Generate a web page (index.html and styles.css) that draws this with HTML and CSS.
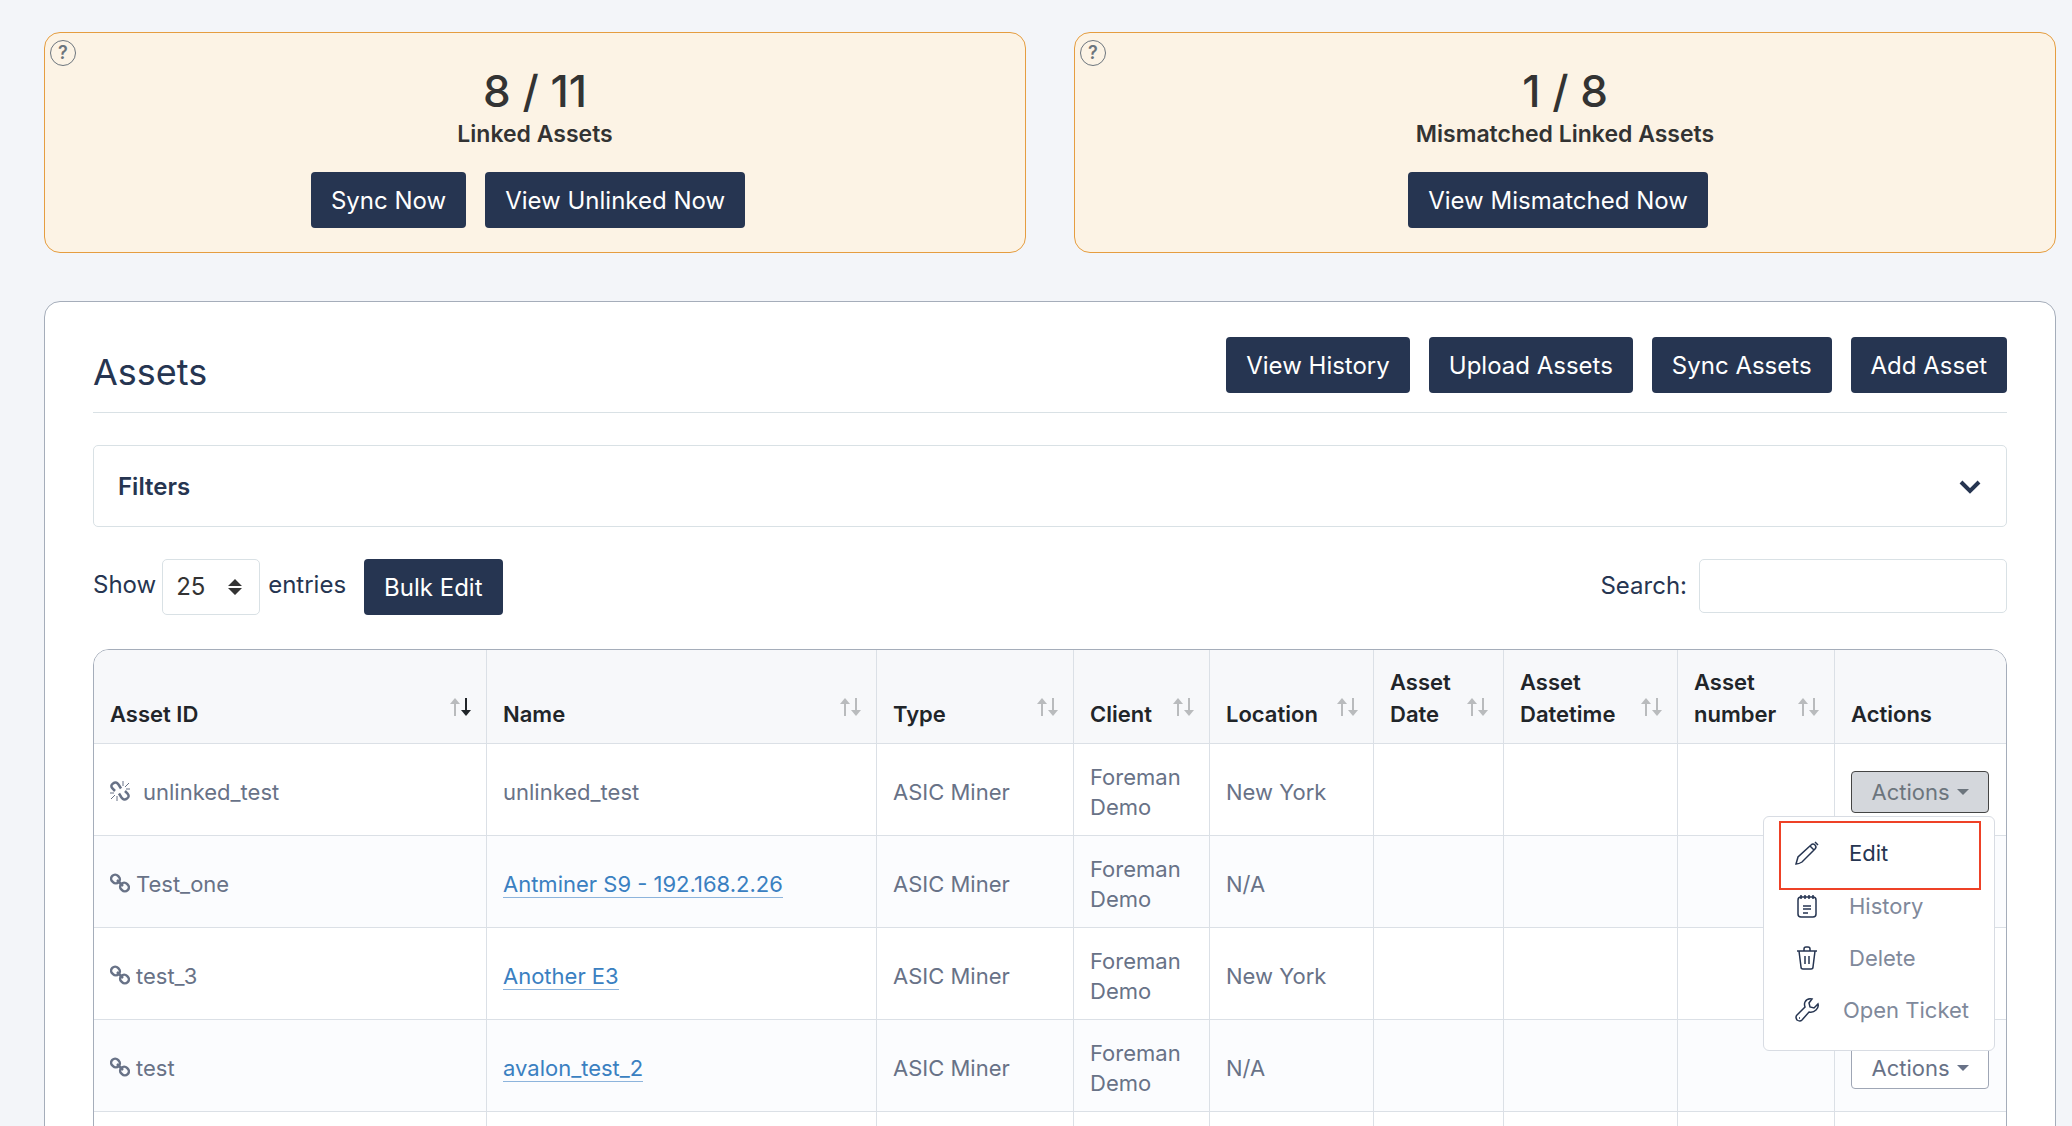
FILE: index.html
```html
<!DOCTYPE html>
<html lang="en">
<head>
  <meta charset="utf-8">
  <title>Assets</title>
  <link rel="stylesheet" href="styles.css">
</head>
<body>
  <svg class="sprite" aria-hidden="true">
    <symbol id="icon-sort" viewBox="0 0 22 18">
      <path class="sort-up" d="M5 18V5" />
      <path class="sort-up head" d="M0 6L5 0L10 6Z" />
      <path class="sort-down" d="M16 0V13" />
      <path class="sort-down head" d="M11 12L16 18L21 12Z" />
    </symbol>
    <symbol id="icon-link" viewBox="0 0 20 20">
      <rect x="1" y="2" width="9" height="8" rx="4" transform="rotate(45 5.5 6)" />
      <rect x="10" y="10" width="9" height="8" rx="4" transform="rotate(45 14.5 14)" />
      <path d="M7 7L13 13" />
    </symbol>
    <symbol id="icon-unlink" viewBox="0 0 20 20">
      <path d="M5 10L2.500 7.500Q0 4.500 3 2.500Q6 0 8.500 3.500L11 7.500" />
      <path d="M15 10L17.500 12.500Q20 15.500 17 17.500Q14 20 11.500 16.500L9 12.500" />
      <path class="thin" d="M13 5V0M15 6L19 2M16 8H20M0 12H4M5 14L1 18M7 15V20" />
    </symbol>
  </svg>

  <div class="page">
    <div class="summary">
      <section class="card">
        <button class="help" aria-label="Help">?</button>
        <p class="count">8 / 11</p>
        <h2>Linked Assets</h2>
        <div class="buttons">
          <button class="btn">Sync Now</button>
          <button class="btn">View Unlinked Now</button>
        </div>
      </section>
      <section class="card">
        <button class="help" aria-label="Help">?</button>
        <p class="count">1 / 8</p>
        <h2>Mismatched Linked Assets</h2>
        <div class="buttons">
          <button class="btn">View Mismatched Now</button>
        </div>
      </section>
    </div>

    <main class="panel">
      <header class="panel-header">
        <h1>Assets</h1>
        <div class="buttons">
          <button class="btn">View History</button>
          <button class="btn">Upload Assets</button>
          <button class="btn">Sync Assets</button>
          <button class="btn">Add Asset</button>
        </div>
      </header>

      <button class="filters">
        <span>Filters</span>
        <svg class="chevron" viewBox="0 0 24 16"><path d="M3 3L12 12L21 3" /></svg>
      </button>

      <div class="toolbar">
        <label for="entries">Show</label>
        <div class="select-box">
          <select id="entries">
            <option>25</option>
          </select>
          <svg class="select-arrows" viewBox="0 0 14 16"><path d="M0 7L7 0L14 7ZM0 9H14L7 16Z" /></svg>
        </div>
        <label for="entries">entries</label>
        <button class="btn bulk">Bulk Edit</button>
        <div class="search">
          <label for="search">Search:</label>
          <input type="text" id="search">
        </div>
      </div>

      <div class="table-box">
        <table>
          <colgroup>
            <col class="col-id">
            <col class="col-name">
            <col class="col-type">
            <col class="col-client">
            <col class="col-location">
            <col class="col-date">
            <col class="col-datetime">
            <col class="col-number">
            <col class="col-actions">
          </colgroup>
          <thead>
            <tr>
              <th><div class="head-cell"><span>Asset ID</span><svg class="sort active"><use href="#icon-sort" /></svg></div></th>
              <th><div class="head-cell"><span>Name</span><svg class="sort"><use href="#icon-sort" /></svg></div></th>
              <th><div class="head-cell"><span>Type</span><svg class="sort"><use href="#icon-sort" /></svg></div></th>
              <th><div class="head-cell"><span>Client</span><svg class="sort"><use href="#icon-sort" /></svg></div></th>
              <th><div class="head-cell"><span>Location</span><svg class="sort"><use href="#icon-sort" /></svg></div></th>
              <th><div class="head-cell"><span>Asset<br>Date</span><svg class="sort"><use href="#icon-sort" /></svg></div></th>
              <th><div class="head-cell"><span>Asset<br>Datetime</span><svg class="sort"><use href="#icon-sort" /></svg></div></th>
              <th><div class="head-cell"><span>Asset<br>number</span><svg class="sort"><use href="#icon-sort" /></svg></div></th>
              <th><div class="head-cell"><span>Actions</span></div></th>
            </tr>
          </thead>
          <tbody>
            <tr>
              <td><svg class="link-icon unlinked"><use href="#icon-unlink" /></svg>unlinked_test</td>
              <td>unlinked_test</td>
              <td>ASIC Miner</td>
              <td>Foreman Demo</td>
              <td>New York</td>
              <td></td>
              <td></td>
              <td></td>
              <td>
                <div class="dropdown">
                  <button class="btn-actions open" aria-expanded="true">Actions <span class="caret"></span></button>
                  <div class="menu">
                    <a class="menu-item selected" href="#edit">
                      <svg viewBox="0 0 24 24"><path d="M1 23L3 16L16 4Q18 2 20 4Q22 6 20 8L7 21Q4 23 1 23ZM15 5L19 9M20 1L23 4" /></svg>
                      <span>Edit</span>
                    </a>
                    <a class="menu-item" href="#history">
                      <svg viewBox="0 0 24 24"><rect x="3" y="3" width="18" height="20" rx="3" /><path d="M6 1V5M10 1V5M14 1V5M18 1V5M8 12H16M8 15H16M8 19H13" /></svg>
                      <span>History</span>
                    </a>
                    <a class="menu-item" href="#delete">
                      <svg viewBox="0 0 24 24"><path d="M2 5H22M4 5L6 21Q6 23 8 23H16Q18 23 18 21L20 5M9 5V3Q9 1 11 1H13Q15 1 15 3V5M10 10V18M14 10V18" /></svg>
                      <span>Delete</span>
                    </a>
                    <a class="menu-item ticket" href="#ticket">
                      <svg viewBox="0 0 24 24"><path d="M17 1Q12 0 10 4Q9 6 10 9L2 17Q0 19 2 22Q5 24 7 22L14 14Q18 15 21 12Q24 9 23 6L19 10L15 9L14 5L17 1ZM4 20H5" /></svg>
                      <span>Open Ticket</span>
                    </a>
                  </div>
                </div>
              </td>
            </tr>
            <tr>
              <td><svg class="link-icon"><use href="#icon-link" /></svg>Test_one</td>
              <td><a class="miner" href="#miner">Antminer S9 - 192.168.2.26</a></td>
              <td>ASIC Miner</td>
              <td>Foreman Demo</td>
              <td>N/A</td>
              <td></td>
              <td></td>
              <td></td>
              <td></td>
            </tr>
            <tr>
              <td><svg class="link-icon"><use href="#icon-link" /></svg>test_3</td>
              <td><a class="miner" href="#miner">Another E3</a></td>
              <td>ASIC Miner</td>
              <td>Foreman Demo</td>
              <td>New York</td>
              <td></td>
              <td></td>
              <td></td>
              <td></td>
            </tr>
            <tr>
              <td><svg class="link-icon"><use href="#icon-link" /></svg>test</td>
              <td><a class="miner" href="#miner">avalon_test_2</a></td>
              <td>ASIC Miner</td>
              <td>Foreman Demo</td>
              <td>N/A</td>
              <td></td>
              <td></td>
              <td></td>
              <td>
                <div class="dropdown">
                  <button class="btn-actions">Actions <span class="caret"></span></button>
                </div>
              </td>
            </tr>
            <tr>
              <td></td>
              <td></td>
              <td></td>
              <td></td>
              <td></td>
              <td></td>
              <td></td>
              <td></td>
              <td></td>
            </tr>
          </tbody>
        </table>
      </div>
    </main>
  </div>
</body>
</html>
```

FILE: styles.css
```css
* {
  box-sizing: border-box;
}

body {
  margin: 0;
  background-color: #f3f5f9;
  color: #263551;
  font-family: Inter, "Open Sans", sans-serif;
  font-size: 24px;
  line-height: 36px;
}

button,
input,
select {
  font: inherit;
  color: inherit;
}

button {
  cursor: pointer;
}

.sprite {
  position: absolute;
  width: 0;
  height: 0;
}

.page {
  height: 100vh;
  overflow: hidden;
  padding: 32px 16px 0 44px;
}

/* Summary cards */
.summary {
  display: grid;
  grid-template-columns: 1fr 1fr;
  gap: 48px;
  margin-bottom: 48px;
}

.card {
  position: relative;
  height: 221px;
  padding-top: 32px;
  background-color: #fcf3e5;
  border: 1px solid #e59d40;
  border-radius: 16px;
  color: #333;
  text-align: center;
}

.card .buttons {
  padding-right: 14px;
}

.help {
  position: absolute;
  top: 7px;
  left: 5px;
  width: 26px;
  height: 26px;
  padding: 0;
  background: none;
  border: 1px solid #6c757d;
  border-radius: 50%;
  color: #6c757d;
  font-size: 18px;
  font-weight: 600;
  line-height: 24px;
}

.count {
  margin: 0;
  font-size: 44px;
  font-weight: 500;
  line-height: 52px;
}

.card h2 {
  margin: 0 0 21px;
  font-size: 23px;
  font-weight: 600;
  line-height: 34px;
}

.buttons {
  display: flex;
  justify-content: center;
  gap: 19px;
}

.btn {
  height: 56px;
  padding: 2px 20px 0;
  background-color: #263551;
  border: 0;
  border-radius: 4px;
  color: #fff;
}

/* Main panel */
.panel {
  padding: 35px 48px 0;
  background-color: #fff;
  border: 1px solid #a5adba;
  border-radius: 16px;
}

.panel-header {
  display: flex;
  justify-content: space-between;
  height: 76px;
  border-bottom: 1px solid #d9e1e5;
}

.panel-header h1 {
  margin: 11px 0 0;
  font-size: 36px;
  font-weight: 400;
  line-height: 48px;
}

.filters {
  display: flex;
  justify-content: space-between;
  align-items: center;
  width: 100%;
  height: 82px;
  margin: 32px 0;
  padding: 2px 24px 0;
  background-color: #fff;
  border: 1px solid #d9e1e5;
  border-radius: 5px;
  font-weight: 600;
}

.chevron {
  width: 24px;
  height: 16px;
  fill: none;
  stroke: #263551;
  stroke-width: 4;
}

.toolbar {
  display: flex;
  align-items: flex-start;
  margin-bottom: 34px;
  line-height: 52px;
}

.select-box {
  position: relative;
  margin: 0 8px 0 6px;
}

.select-box select {
  appearance: none;
  display: block;
  width: 98px;
  height: 56px;
  padding: 0 13px;
  background-color: #fff;
  border: 1px solid #d9e1e5;
  border-radius: 5px;
  color: #333;
}

.select-arrows {
  position: absolute;
  top: 20px;
  right: 18px;
  width: 14px;
  height: 16px;
  fill: #333;
  pointer-events: none;
}

.bulk {
  margin-left: 18px;
}

.search {
  display: flex;
  align-items: center;
  margin-left: auto;
}

.search input {
  width: 308px;
  height: 54px;
  margin-left: 12px;
  border: 1px solid #d9e1e5;
  border-radius: 5px;
}

/* Assets table */
.table-box {
  border: 1px solid #a5adba;
  border-radius: 16px;
  overflow: hidden;
}

table {
  width: 100%;
  table-layout: fixed;
  border-collapse: separate;
  border-spacing: 0;
  color: #687287;
  font-size: 22px;
  line-height: 30px;
}

.col-name { width: 390px; }
.col-type { width: 197px; }
.col-client { width: 136px; }
.col-location { width: 164px; }
.col-date { width: 130px; }
.col-datetime { width: 174px; }
.col-number { width: 157px; }
.col-actions { width: 171px; }

th,
td {
  padding: 0 16px;
  border-right: 1px solid #dbe0e6;
  border-bottom: 1px solid #dbe0e6;
  text-align: left;
}

th:last-child,
td:last-child {
  border-right: 0;
}

th {
  height: 94px;
  padding-bottom: 13px;
  background-color: #f7f8fa;
  color: #212529;
  font-weight: 600;
  line-height: 32px;
  vertical-align: bottom;
}

td {
  height: 92px;
  padding-top: 4px;
}

tbody tr:nth-child(even) {
  background-color: #fbfcfe;
}

.head-cell {
  display: flex;
  justify-content: space-between;
  align-items: flex-end;
}

.sort {
  flex: none;
  width: 22px;
  height: 18px;
  margin-bottom: 14px;
  margin-right: -2px;
  fill: none;
  stroke: #b9bbbd;
  stroke-width: 2;
}

.sort-up.head,
.sort-down.head {
  stroke: none;
  fill: #b9bbbd;
}

.sort.active {
  --down: #212529;
}

.sort-down {
  stroke: var(--down, #b9bbbd);
}

.sort-down.head {
  fill: var(--down, #b9bbbd);
}

.link-icon {
  width: 20px;
  height: 20px;
  margin-right: 6px;
  vertical-align: -1px;
  fill: none;
  stroke: #687287;
  stroke-width: 2.5;
}

.link-icon.unlinked {
  margin-right: 13px;
}

.thin {
  stroke-width: 1;
}

.miner {
  border-bottom: 1px solid #8db4dc;
  color: #3a80c1;
  text-decoration: none;
}

/* Row actions */
.dropdown {
  position: relative;
}

.btn-actions {
  display: flex;
  justify-content: center;
  align-items: center;
  gap: 7px;
  width: 138px;
  height: 42px;
  padding: 0;
  background-color: #fff;
  border: 1px solid #9fa6b5;
  border-radius: 4px;
  color: #687287;
}

.btn-actions.open {
  background-color: #d4d7dc;
  border-color: #444;
  color: #6c757d;
}

.caret {
  border: 6px solid transparent;
  border-top-color: currentColor;
  border-bottom: 0;
}

.menu {
  position: absolute;
  top: 45px;
  right: -5px;
  z-index: 1;
  width: 232px;
  height: 235px;
  padding: 4px 13px 4px 15px;
  background-color: #fff;
  border: 1px solid #d8dce3;
  border-radius: 6px;
}

.menu-item {
  display: flex;
  align-items: center;
  height: 52px;
  padding-left: 16px;
  color: #7f899b;
  text-decoration: none;
}

.menu-item svg {
  width: 24px;
  height: 24px;
  margin-right: 30px;
  fill: none;
  stroke: #263551;
  stroke-width: 1.5;
}

.menu-item.selected {
  height: 69px;
  padding: 0 0 4px 14px;
  border: 2px solid #ee4126;
  color: #263551;
}

.menu-item.selected + .menu-item {
  margin-top: -10px;
}

.menu-item.ticket svg {
  margin-right: 24px;
}
```
